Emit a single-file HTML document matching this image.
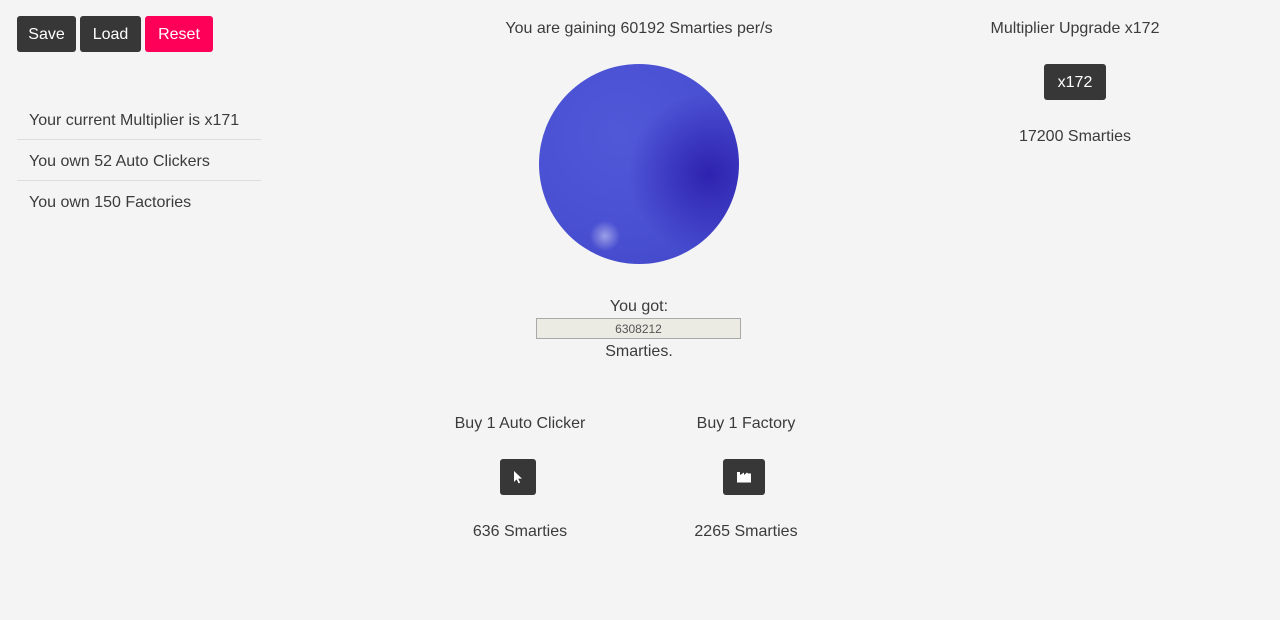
<!DOCTYPE html>
<html><head><meta charset="utf-8"><style>
*{margin:0;padding:0;box-sizing:border-box}
body{width:1280px;height:620px;background:#f4f4f4;font-family:"Liberation Sans",sans-serif;color:#3b3b3b;font-size:16px;position:relative;overflow:hidden}
.a{position:absolute;white-space:nowrap}
.btn{position:absolute;background:#373737;color:#fff;border-radius:3px;display:flex;align-items:center;justify-content:center;font-size:16px;padding-top:2px}
.c{text-align:center}
.li{position:absolute;left:17px;width:244px;height:41px;padding-left:12px;line-height:43px;font-size:16px}
</style></head><body>
<div class="btn" style="left:17px;top:16px;width:59px;height:36px">Save</div>
<div class="btn" style="left:80px;top:16px;width:61px;height:36px">Load</div>
<div class="btn" style="left:145px;top:16px;width:68px;height:36px;background:#ff0059">Reset</div>

<div class="li" style="top:99px;border-bottom:1px solid #ddd">Your current Multiplier is x171</div>
<div class="li" style="top:140px;border-bottom:1px solid #ddd">You own 52 Auto Clickers</div>
<div class="li" style="top:181px">You own 150 Factories</div>

<div class="a c" style="left:439px;width:400px;top:20px">You are gaining 60192 Smarties per/s</div>
<div class="a" style="left:539px;top:64px;width:200px;height:200px;border-radius:50%;background:radial-gradient(circle at 33% 86%,rgba(255,255,255,.45) 0,rgba(255,255,255,0) 7%),radial-gradient(circle at 85% 55%,#2e22b0 0,rgba(46,34,176,0) 40%),radial-gradient(circle at 40% 35%,#5058d8 0,#4a50d2 55%,#4045c8 100%)"></div>
<div class="a c" style="left:539px;width:200px;top:298px">You got:</div>
<div class="a c" style="left:536px;top:318px;width:205px;height:21px;background:#ebebe4;border:1px solid #a9a9a9;font-size:12px;line-height:20px;color:#555">6308212</div>
<div class="a c" style="left:539px;width:200px;top:343px">Smarties.</div>

<div class="a c" style="left:420px;width:200px;top:415px">Buy 1 Auto Clicker</div>
<div class="btn" style="left:500px;top:459px;width:36px;height:36px;padding:0"><svg width="12" height="16" viewBox="0 0 12 16"><path d="M2 2v11l2.6-2.6 2 4 1.6-.8-2-4H10z" fill="#fff"/></svg></div>
<div class="a c" style="left:420px;width:200px;top:523px">636 Smarties</div>

<div class="a c" style="left:646px;width:200px;top:415px">Buy 1 Factory</div>
<div class="btn" style="left:723px;top:459px;width:42px;height:36px;padding:0"><svg width="14" height="12" viewBox="0 0 14 12"><path d="M0 1h3v3l4-2.5v2.5l3-2.5 1 1h3v9H0z" fill="#fff"/></svg></div>
<div class="a c" style="left:646px;width:200px;top:523px">2265 Smarties</div>

<div class="a c" style="left:975px;width:200px;top:20px">Multiplier Upgrade x172</div>
<div class="btn" style="left:1044px;top:64px;width:62px;height:36px">x172</div>
<div class="a c" style="left:975px;width:200px;top:128px">17200 Smarties</div>
</body></html>
